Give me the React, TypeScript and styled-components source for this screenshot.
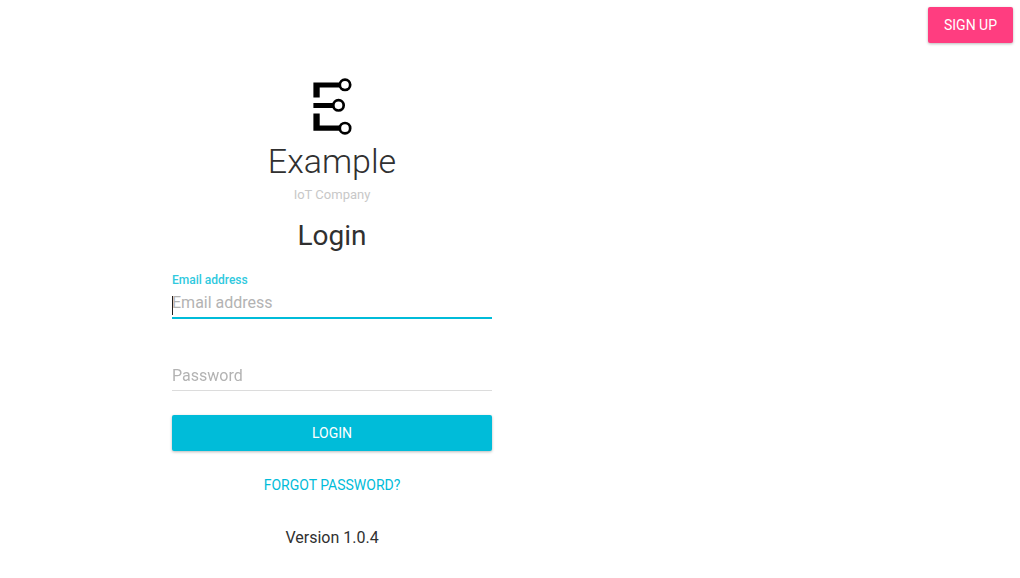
import React from "react";
import styled, { createGlobalStyle } from "styled-components";

const GlobalStyle = createGlobalStyle`
  *, *::before, *::after { box-sizing: border-box; }
  body {
    margin: 0;
    background: #fff;
    color: #303030;
    font-family: Roboto, "Liberation Sans", sans-serif;
    font-size: 16px;
    line-height: 24px;
  }
`;

const Page = styled.main`
  display: grid;
  grid-template-columns: minmax(0, 1fr) 356px;
  min-height: 100vh;
`;

const Panel = styled.section`
  display: flex;
  flex-direction: column;
  align-items: center;
  padding: 77px 16px 24px;
`;

const Aside = styled.aside`
  display: flex;
  justify-content: flex-end;
  align-items: flex-start;
  padding: 7px;
`;

const Logo = styled.svg`
  width: 40px;
  height: 58px;
`;

const Brand = styled.div`
  margin-top: 4px;
  font-size: 34px;
  font-weight: 300;
  line-height: 44px;
`;

const Tagline = styled.div`
  margin-top: 4px;
  color: #c8c8c8;
  font-size: 13px;
  line-height: 16px;
`;

const Title = styled.h1`
  margin: 16px 0 0;
  font-size: 28px;
  font-weight: 400;
  line-height: 34px;
`;

const Form = styled.form`
  display: flex;
  flex-direction: column;
  width: 100%;
  max-width: 320px;
  margin-top: 18px;
`;

const Field = styled.div<{ $active?: boolean }>`
  position: relative;
  display: flex;
  flex-direction: column;
  height: ${(p) => (p.$active ? 48 : 72)}px;
  justify-content: flex-end;
  border-bottom: ${(p) => (p.$active ? "2px solid #00bcd9" : "1px solid #dcdcdc")};
`;

const Label = styled.label`
  color: #30c9de;
  font-size: 12px;
  font-weight: 500;
  line-height: 18px;
`;

const Input = styled.input`
  width: 100%;
  height: 28px;
  margin: 0;
  padding: 0 0 2px;
  border: 0;
  outline: 0;
  background: transparent;
  color: #303030;
  font: inherit;
  caret-color: transparent;
  &::placeholder { color: #b3b3b3; opacity: 1; }
`;

const Caret = styled.span`
  position: absolute;
  left: 0;
  bottom: 2px;
  width: 1px;
  height: 19px;
  background: #202020;
`;

const Button = styled.button<{ $tone: "primary" | "accent" }>`
  height: 36px;
  padding: 0 16px;
  border: 0;
  border-radius: 2px;
  background: ${(p) => (p.$tone === "primary" ? "#00bcd9" : "#ff3d80")};
  color: #fff;
  font: inherit;
  font-size: 14px;
  box-shadow: 0 1px 3px rgba(0, 0, 0, 0.28);
  cursor: pointer;
`;

const Submit = styled(Button)`
  margin-top: 24px;
`;

const Forgot = styled.a`
  margin-top: 22px;
  color: #00bcd9;
  font-size: 14px;
  text-decoration: none;
`;

const Version = styled.p`
  margin: 29px 0 0;
`;

export default function App() {
  return (
    <>
      <GlobalStyle />
      <Page>
        <Panel>
          <Logo viewBox="0 0 40 58" role="img" aria-label="Example logo">
            <path d="M1.4 5.5H28V10.6H7.7V20.5H1.4zM1.4 26H22V31H1.4zM1.4 36.4H7.7V48.5H28V53.7H1.4z" fill="#000" />
            <g fill="#fff" stroke="#000" strokeWidth="2.7">
              <circle cx="33" cy="7.8" r="5.2" />
              <circle cx="26.5" cy="28.3" r="5.2" />
              <circle cx="33" cy="51.2" r="5.2" />
            </g>
          </Logo>
          <Brand>Example</Brand>
          <Tagline>IoT Company</Tagline>
          <Title>Login</Title>
          <Form onSubmit={(e) => e.preventDefault()}>
            <Field $active>
              <Label htmlFor="email">Email address</Label>
              <Input id="email" type="email" placeholder="Email address" autoFocus />
              <Caret aria-hidden="true" />
            </Field>
            <Field>
              <Input type="password" aria-label="Password" placeholder="Password" />
            </Field>
            <Submit $tone="primary" type="submit">LOGIN</Submit>
          </Form>
          <Forgot href="#forgot">FORGOT PASSWORD?</Forgot>
          <Version>Version 1.0.4</Version>
        </Panel>
        <Aside>
          <Button $tone="accent" type="button">SIGN UP</Button>
        </Aside>
      </Page>
    </>
  );
}
